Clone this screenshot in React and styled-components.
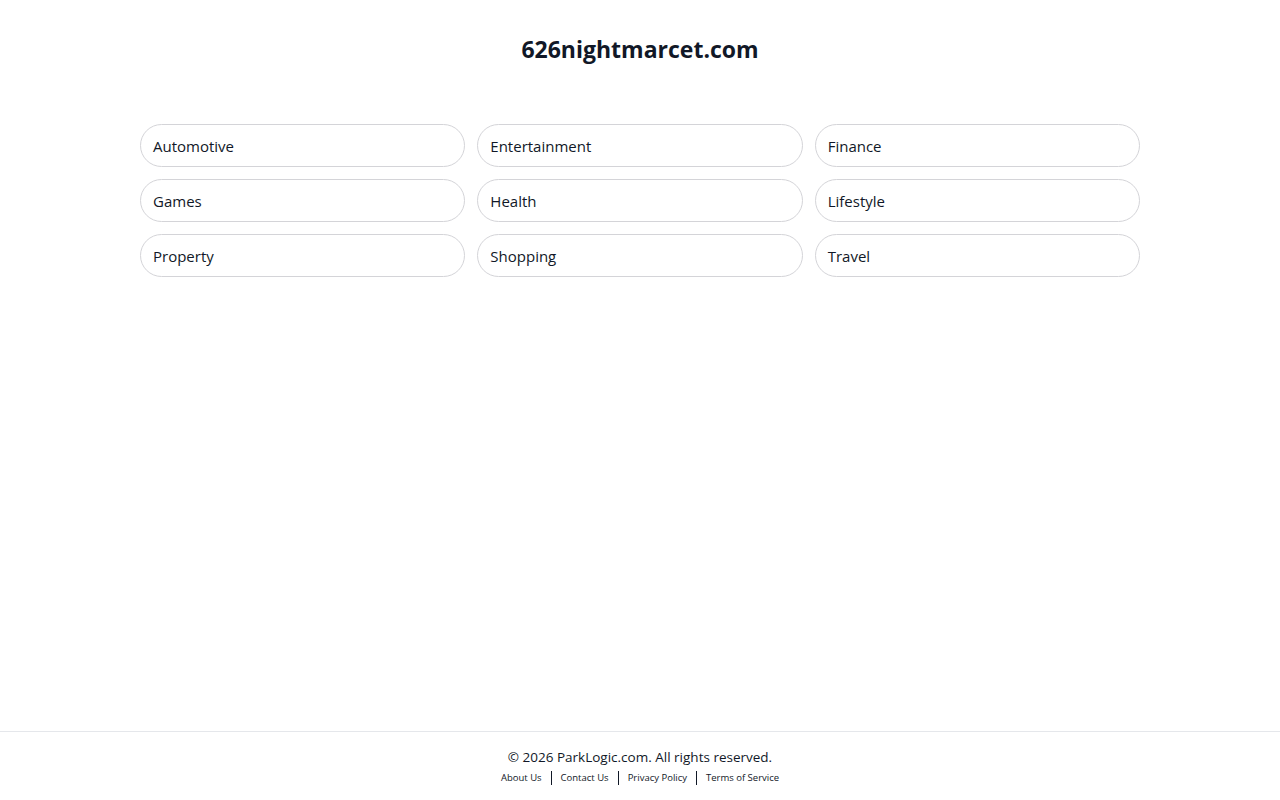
import React from 'react';
import styled, { createGlobalStyle } from 'styled-components';

const categories = [
  'Automotive', 'Entertainment', 'Finance',
  'Games', 'Health', 'Lifestyle',
  'Property', 'Shopping', 'Travel',
];

const links = ['About Us', 'Contact Us', 'Privacy Policy', 'Terms of Service'];

const GlobalStyle = createGlobalStyle`
  html, body {
    margin: 0;
    padding: 0;
    background: #fff;
    font-family: "Open Sans", "Noto Sans", "DejaVu Sans", sans-serif;
    color: #111827;
  }
`;

export default function App() {
  return (
    <>
      <GlobalStyle />
      <Page>
        <Main>
          <Title>626nightmarcet.com</Title>
          <Grid>
            {categories.map(name => (
              <Category key={name} href="#">{name}</Category>
            ))}
          </Grid>
        </Main>
        <Footer>
          <Copyright>© 2026 ParkLogic.com. All rights reserved.</Copyright>
          <LinkRow>
            {links.map(l => (
              <FooterLink key={l} href="#">{l}</FooterLink>
            ))}
          </LinkRow>
        </Footer>
      </Page>
    </>
  );
}

const Page = styled.div`
  display: flex;
  flex-direction: column;
  min-height: 100vh;
`;

const Main = styled.main`
  flex: 1;
  display: flex;
  flex-direction: column;
  align-items: center;
  padding-top: 33px;
`;

const Title = styled.h1`
  margin: 0 0 59px;
  font-size: 23px;
  line-height: 32px;
  font-weight: 700;
  color: #111827;
`;

const Grid = styled.div`
  display: grid;
  grid-template-columns: repeat(3, 1fr);
  column-gap: 12px;
  row-gap: 12px;
  width: 1000px;
`;

const Category = styled.a`
  display: flex;
  align-items: center;
  height: 43px;
  box-sizing: border-box;
  padding: 0 12px;
  border: 1px solid #d4d4d8;
  border-radius: 22px;
  font-size: 15px;
  color: #111827;
  text-decoration: none;
`;

const Footer = styled.footer`
  border-top: 1px solid #e5e7eb;
  padding: 15px 0 15px;
  display: flex;
  flex-direction: column;
  align-items: center;
`;

const Copyright = styled.div`
  font-size: 13.5px;
  line-height: 20px;
  color: #111827;
`;

const LinkRow = styled.div`
  display: flex;
  align-items: center;
  margin-top: 4px;
`;

const FooterLink = styled.a`
  font-size: 9.5px;
  line-height: 14px;
  padding: 0 9px;
  color: #111827;
  text-decoration: none;
  border-left: 1px solid #111827;

  &:first-child {
    border-left: none;
  }
`;
